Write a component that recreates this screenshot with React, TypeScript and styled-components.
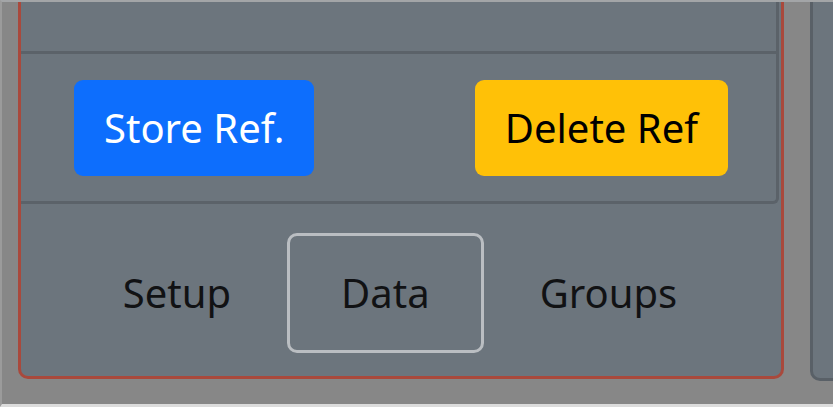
import React, { FC } from 'react';
import styled, { createGlobalStyle } from 'styled-components';

const GlobalStyle = createGlobalStyle`
  html, body {
    margin: 0;
    padding: 0;
    background: #878787;
  }
  body {
    font-family: 'Noto Sans', 'Open Sans', sans-serif;
  }
  * {
    box-sizing: border-box;
  }
`;

const Frame = styled.div`
  display: flex;
  align-items: flex-start;
  height: 407px;
  overflow: hidden;
  padding-left: 16px;
  border-top: 2px solid #a3a5a7;
  border-left: 2px solid #9b9b9b;
  border-bottom: 3px solid #dcdcdc;
`;

const Panel = styled.section`
  flex: 0 0 766px;
  display: flex;
  flex-direction: column;
  padding-right: 2px;
  background: #6c757d;
  border: 3px solid #a9493c;
  border-top: none;
  border-radius: 0 0 10px 10px;
`;

const Card = styled.div`
  border: 3px solid #5b6269;
  border-top: none;
  border-left: none;
  border-radius: 0 0 6px 0;
`;

const CardHeader = styled.div`
  height: 52px;
  border-bottom: 3px solid #5b6269;
`;

const CardFooter = styled.div`
  display: flex;
  justify-content: space-between;
  align-items: center;
  padding: 26px 48px 25px 53px;
`;

const Button = styled.button<{ $variant: 'primary' | 'warning' }>`
  height: 96px;
  padding: 0 30px;
  border: none;
  border-radius: 9px;
  font-family: inherit;
  font-size: 40px;
  line-height: 1;
  background: ${({ $variant }) => ($variant === 'primary' ? '#0d6efd' : '#ffc107')};
  color: ${({ $variant }) => ($variant === 'primary' ? '#ffffff' : '#000000')};
`;

const Nav = styled.nav`
  display: flex;
  justify-content: center;
  gap: 2px;
  padding: 29px 0 23px;
`;

const NavItem = styled.a<{ $active?: boolean }>`
  display: block;
  padding: 27px 51px;
  font-size: 40px;
  line-height: 60px;
  color: #111214;
  border: 3px solid ${({ $active }) => ($active ? '#babec2' : 'transparent')};
  border-radius: 10px;
  cursor: pointer;
`;

const SidePanel = styled.div`
  flex: 0 0 60px;
  height: 379px;
  margin-left: 26px;
  background: #6c757d;
  border: 3px solid #596067;
  border-top: none;
  border-right: none;
  border-radius: 0 0 0 10px;
`;

const App: FC = () => (
  <>
    <GlobalStyle />
    <Frame>
      <Panel>
        <Card>
          <CardHeader />
          <CardFooter>
            <Button $variant="primary">Store Ref.</Button>
            <Button $variant="warning">Delete Ref</Button>
          </CardFooter>
        </Card>
        <Nav>
          <NavItem>Setup</NavItem>
          <NavItem $active>Data</NavItem>
          <NavItem>Groups</NavItem>
        </Nav>
      </Panel>
      <SidePanel />
    </Frame>
  </>
);

export default App;
